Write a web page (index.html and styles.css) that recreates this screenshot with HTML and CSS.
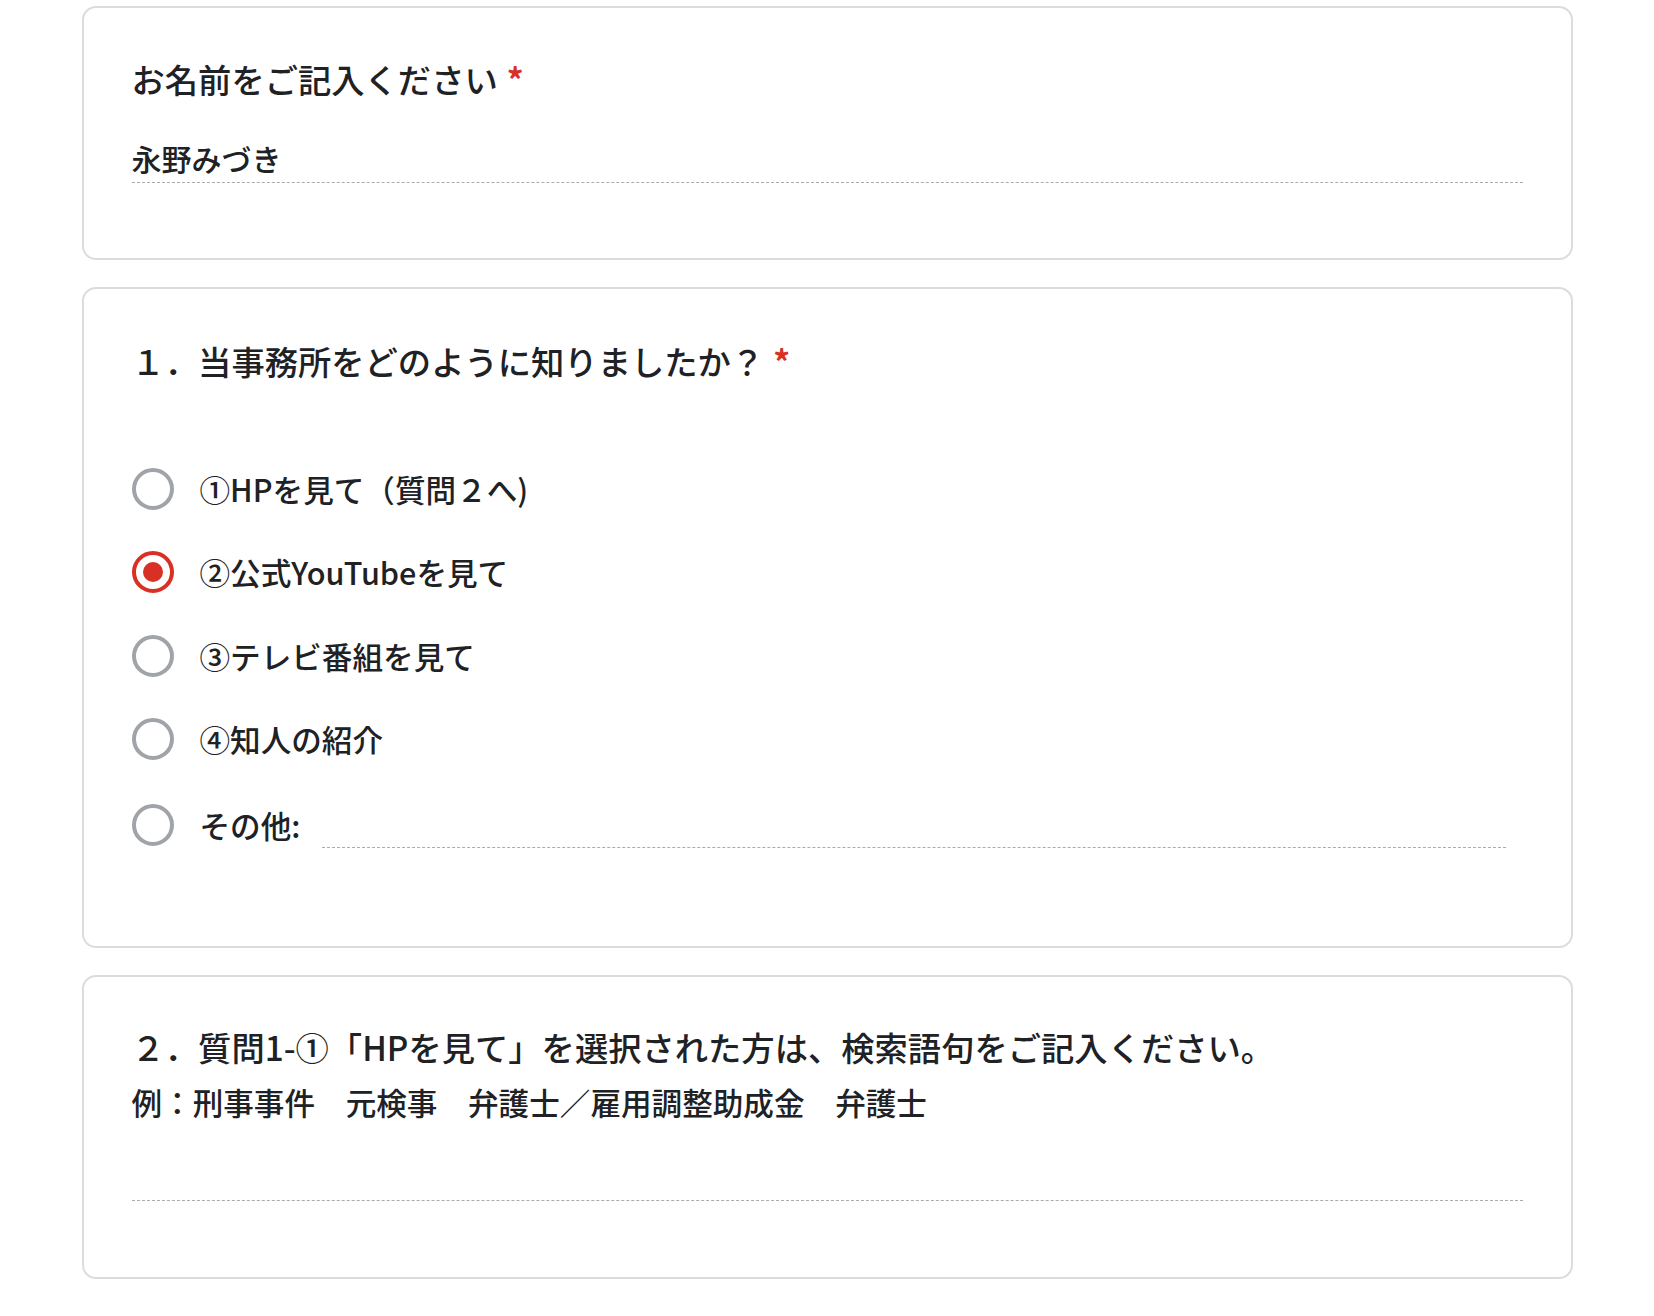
FILE: index.html
```html
<!DOCTYPE html>
<html lang="ja">
<head>
<meta charset="utf-8">
<title>フォーム</title>
<link rel="stylesheet" href="styles.css">
</head>
<body>
<main class="form">
  <section class="card card-name">
    <div class="q-title">お名前をご記入ください<span class="req">*</span></div>
    <div class="answer answer-name">永野みづき</div>
  </section>

  <section class="card card-q1">
    <div class="q-title q-num">１．当事務所をどのように知りましたか？<span class="req">*</span></div>
    <div class="options">
      <div class="option"><span class="radio"></span><span class="label">①HPを見て（質問２へ)</span></div>
      <div class="option"><span class="radio checked"></span><span class="label">②公式YouTubeを見て</span></div>
      <div class="option"><span class="radio"></span><span class="label">③テレビ番組を見て</span></div>
      <div class="option"><span class="radio"></span><span class="label">④知人の紹介</span></div>
      <div class="option option-other"><span class="radio"></span><span class="label">その他:</span><span class="other-input"></span></div>
    </div>
  </section>

  <section class="card card-q2">
    <div class="q-title q-num">２．質問1-①「HPを見て」を選択された方は、検索語句をご記入ください。</div>
    <div class="q-desc">例：刑事事件　元検事　弁護士／雇用調整助成金　弁護士</div>
    <div class="answer answer-long"></div>
  </section>
</main>
</body>
</html>
```

FILE: styles.css
```css
* { box-sizing: border-box; }

html, body {
  margin: 0;
  padding: 0;
  background: #ffffff;
}

body {
  font-family: "Noto Sans CJK JP", "Noto Sans", sans-serif;
  color: #202124;
  font-weight: 500;
}

.form {
  width: 1491px;
  margin: 0 auto;
  padding-top: 6px;
}

.card {
  border: 2px solid #dadce0;
  border-radius: 14px;
  padding: 47px 48px 0 48px;
  background: #fff;
  margin-bottom: 27px;
}

.card-name { height: 254px; }
.card-q1 { height: 661px; padding-top: 48px; }
.card-q2 { height: 304px; padding-top: 46px; }

.q-title {
  font-size: 33.3px;
  line-height: 48px;
  white-space: nowrap;
}

.req {
  color: #d93025;
  margin-left: 9px;
  font-weight: 700;
}

.answer {
  border-bottom: 1px dashed #a9abae;
}

.answer-name {
  margin-top: 35px;
  font-size: 30px;
  line-height: 40px;
  padding-bottom: 4px;
  height: 45px;
}

.options {
  margin-top: 62px;
}

.option {
  display: flex;
  align-items: center;
  height: 83.5px;
}

.option-other {
  height: 88px;
}

.radio {
  width: 42px;
  height: 42px;
  border-radius: 50%;
  border: 4px solid #a0a4a8;
  flex: none;
  display: flex;
  align-items: center;
  justify-content: center;
}

.radio.checked {
  border-color: #d93025;
}

.radio.checked::after {
  content: "";
  width: 20px;
  height: 20px;
  border-radius: 50%;
  background: #d93025;
}

.label {
  margin-left: 26px;
  font-size: 30.6px;
  line-height: 40px;
  white-space: nowrap;
}

.other-input {
  flex: 1;
  height: 46px;
  align-self: center;
  margin-left: 22px;
  margin-right: 17px;
  border-bottom: 1px dashed #a9abae;
}

.q-desc {
  margin-top: 9px;
  font-size: 30.6px;
  line-height: 44px;
  white-space: nowrap;
}

.answer-long {
  margin-top: 33px;
  height: 44px;
}
```
